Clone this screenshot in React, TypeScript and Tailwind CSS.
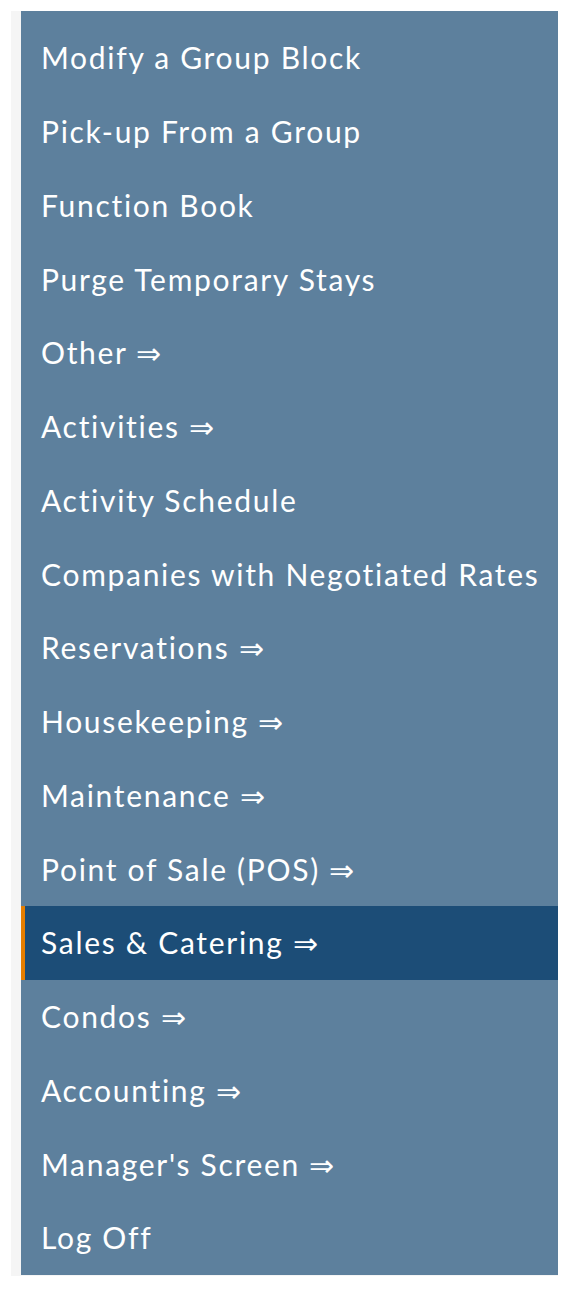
const items: { label: string; more?: boolean; active?: boolean }[] = [
  { label: "Modify a Group Block" },
  { label: "Pick-up From a Group" },
  { label: "Function Book" },
  { label: "Purge Temporary Stays" },
  { label: "Other", more: true },
  { label: "Activities", more: true },
  { label: "Activity Schedule" },
  { label: "Companies with Negotiated Rates" },
  { label: "Reservations", more: true },
  { label: "Housekeeping", more: true },
  { label: "Maintenance", more: true },
  { label: "Point of Sale (POS)", more: true },
  { label: "Sales & Catering", more: true, active: true },
  { label: "Condos", more: true },
  { label: "Accounting", more: true },
  { label: "Manager's Screen", more: true },
  { label: "Log Off" },
];

export default function App() {
  return (
    <div className="min-h-[1290px] bg-white pt-[11px] pl-[11px] font-['Lato',sans-serif]">
      <div className="flex w-[547px] bg-[#f5f5f5] pl-[10px] pb-px">
        <nav className="flex w-[537px] flex-col bg-[#5d809d] pt-[10px]">
          {items.map((item) => (
            <a
              key={item.label}
              href="#"
              className={
                item.active
                  ? "flex h-[73.75px] items-center border-l-4 border-[#e67e00] bg-[#1c4d77] pl-4 text-[30px] tracking-[1.7px] text-white"
                  : "flex h-[73.75px] items-center pl-5 text-[30px] tracking-[1.7px] text-white"
              }
            >
              {item.label}
              {item.more && " \u21d2"}
            </a>
          ))}
        </nav>
      </div>
    </div>
  );
}
